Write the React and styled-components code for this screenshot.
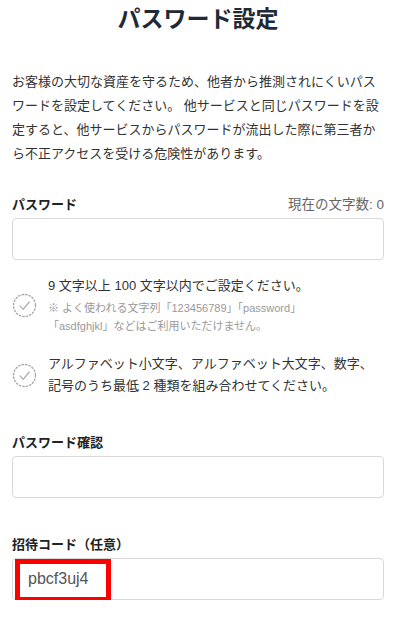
import styled, { createGlobalStyle } from "styled-components";

const GlobalStyle = createGlobalStyle`
  body {
    margin: 0;
    background: #fff;
    font-family: "Liberation Sans", "Noto Sans CJK JP", sans-serif;
    color: #333;
  }
`;

const Page = styled.div`
  width: 400px;
  padding: 4px 16px 0 12px;
  box-sizing: border-box;
`;

const Title = styled.h1`
  margin: 0;
  font-size: 23px;
  line-height: 30px;
  font-weight: 700;
  text-align: center;
  color: #202a37;
`;

const Lead = styled.p`
  margin: 36px 0 27px;
  font-size: 13px;
  line-height: 24px;
  color: #333;
`;

const Field = styled.div`
  display: flex;
  flex-direction: column;
  margin-bottom: ${(p) => p.$gap || 0}px;
`;

const LabelRow = styled.div`
  display: flex;
  justify-content: space-between;
  align-items: center;
  height: 20px;
  margin-bottom: 5px;
`;

const Label = styled.label`
  font-size: 13px;
  font-weight: 700;
  color: #222;
`;

const Counter = styled.span`
  font-size: 13.5px;
  color: #666;
`;

const FieldBox = styled.div`
  position: relative;
`;

const Input = styled.input`
  display: block;
  width: 100%;
  height: 42px;
  box-sizing: border-box;
  border: 1px solid #d9d9d9;
  border-radius: 4px;
  padding: 0 15px;
  font-family: "Liberation Sans", "Noto Sans CJK JP", sans-serif;
  font-size: 16px;
  color: #555;
  background: #fff;
  outline: none;
`;

const Highlight = styled.span`
  position: absolute;
  left: 3px;
  top: 1px;
  width: 96px;
  height: 43px;
  box-sizing: border-box;
  border: 5px solid #ff0000;
  pointer-events: none;
`;

const Rules = styled.ul`
  list-style: none;
  margin: 15px 0 34px;
  padding: 0;
  display: flex;
  flex-direction: column;
  gap: 18px;
`;

const Rule = styled.li`
  display: flex;
  align-items: center;
  gap: 11px;
`;

const RuleIcon = styled.svg`
  flex: none;
  width: 25px;
  height: 25px;
`;

const RuleBody = styled.div`
  display: flex;
  flex-direction: column;
`;

const RuleText = styled.span`
  font-size: 13px;
  line-height: 22px;
  color: #333;
`;

const RuleNote = styled.span`
  margin-top: 2px;
  font-size: 11px;
  line-height: 18px;
  color: #999;
`;

const CheckCircle = () => (
  <RuleIcon viewBox="0 0 25 25">
    <circle
      cx="12.5"
      cy="12.5"
      r="11"
      fill="none"
      stroke="#aaa"
      strokeWidth="1.4"
      strokeDasharray="1.4 2.1"
      strokeLinecap="round"
    />
    <polyline
      points="8,12.8 11.2,16.3 17.2,9"
      fill="none"
      stroke="#aaa"
      strokeWidth="1.2"
      strokeLinecap="round"
      strokeLinejoin="round"
    />
  </RuleIcon>
);

export default function App() {
  return (
    <>
      <GlobalStyle />
      <Page>
        <Title>パスワード設定</Title>
        <Lead>
          お客様の大切な資産を守るため、他者から推測されにくいパスワードを設定してください。
          他サービスと同じパスワードを設定すると、他サービスからパスワードが流出した際に第三者から不正アクセスを受ける危険性があります。
        </Lead>

        <Field>
          <LabelRow>
            <Label>パスワード</Label>
            <Counter>現在の文字数: 0</Counter>
          </LabelRow>
          <Input type="password" />
        </Field>

        <Rules>
          <Rule>
            <CheckCircle />
            <RuleBody>
              <RuleText>9 文字以上 100 文字以内でご設定ください。</RuleText>
              <RuleNote>
                ※ よく使われる文字列「123456789」「password」
                <br />
                「asdfghjkl」などはご利用いただけません。
              </RuleNote>
            </RuleBody>
          </Rule>
          <Rule>
            <CheckCircle />
            <RuleBody>
              <RuleText>
                アルファベット小文字、アルファベット大文字、数字、
                <br />
                記号のうち最低 2 種類を組み合わせてください。
              </RuleText>
            </RuleBody>
          </Rule>
        </Rules>

        <Field $gap={35}>
          <LabelRow>
            <Label>パスワード確認</Label>
          </LabelRow>
          <Input type="password" />
        </Field>

        <Field>
          <LabelRow>
            <Label>招待コード（任意）</Label>
          </LabelRow>
          <FieldBox>
            <Input type="text" defaultValue="pbcf3uj4" readOnly />
            <Highlight />
          </FieldBox>
        </Field>
      </Page>
    </>
  );
}
